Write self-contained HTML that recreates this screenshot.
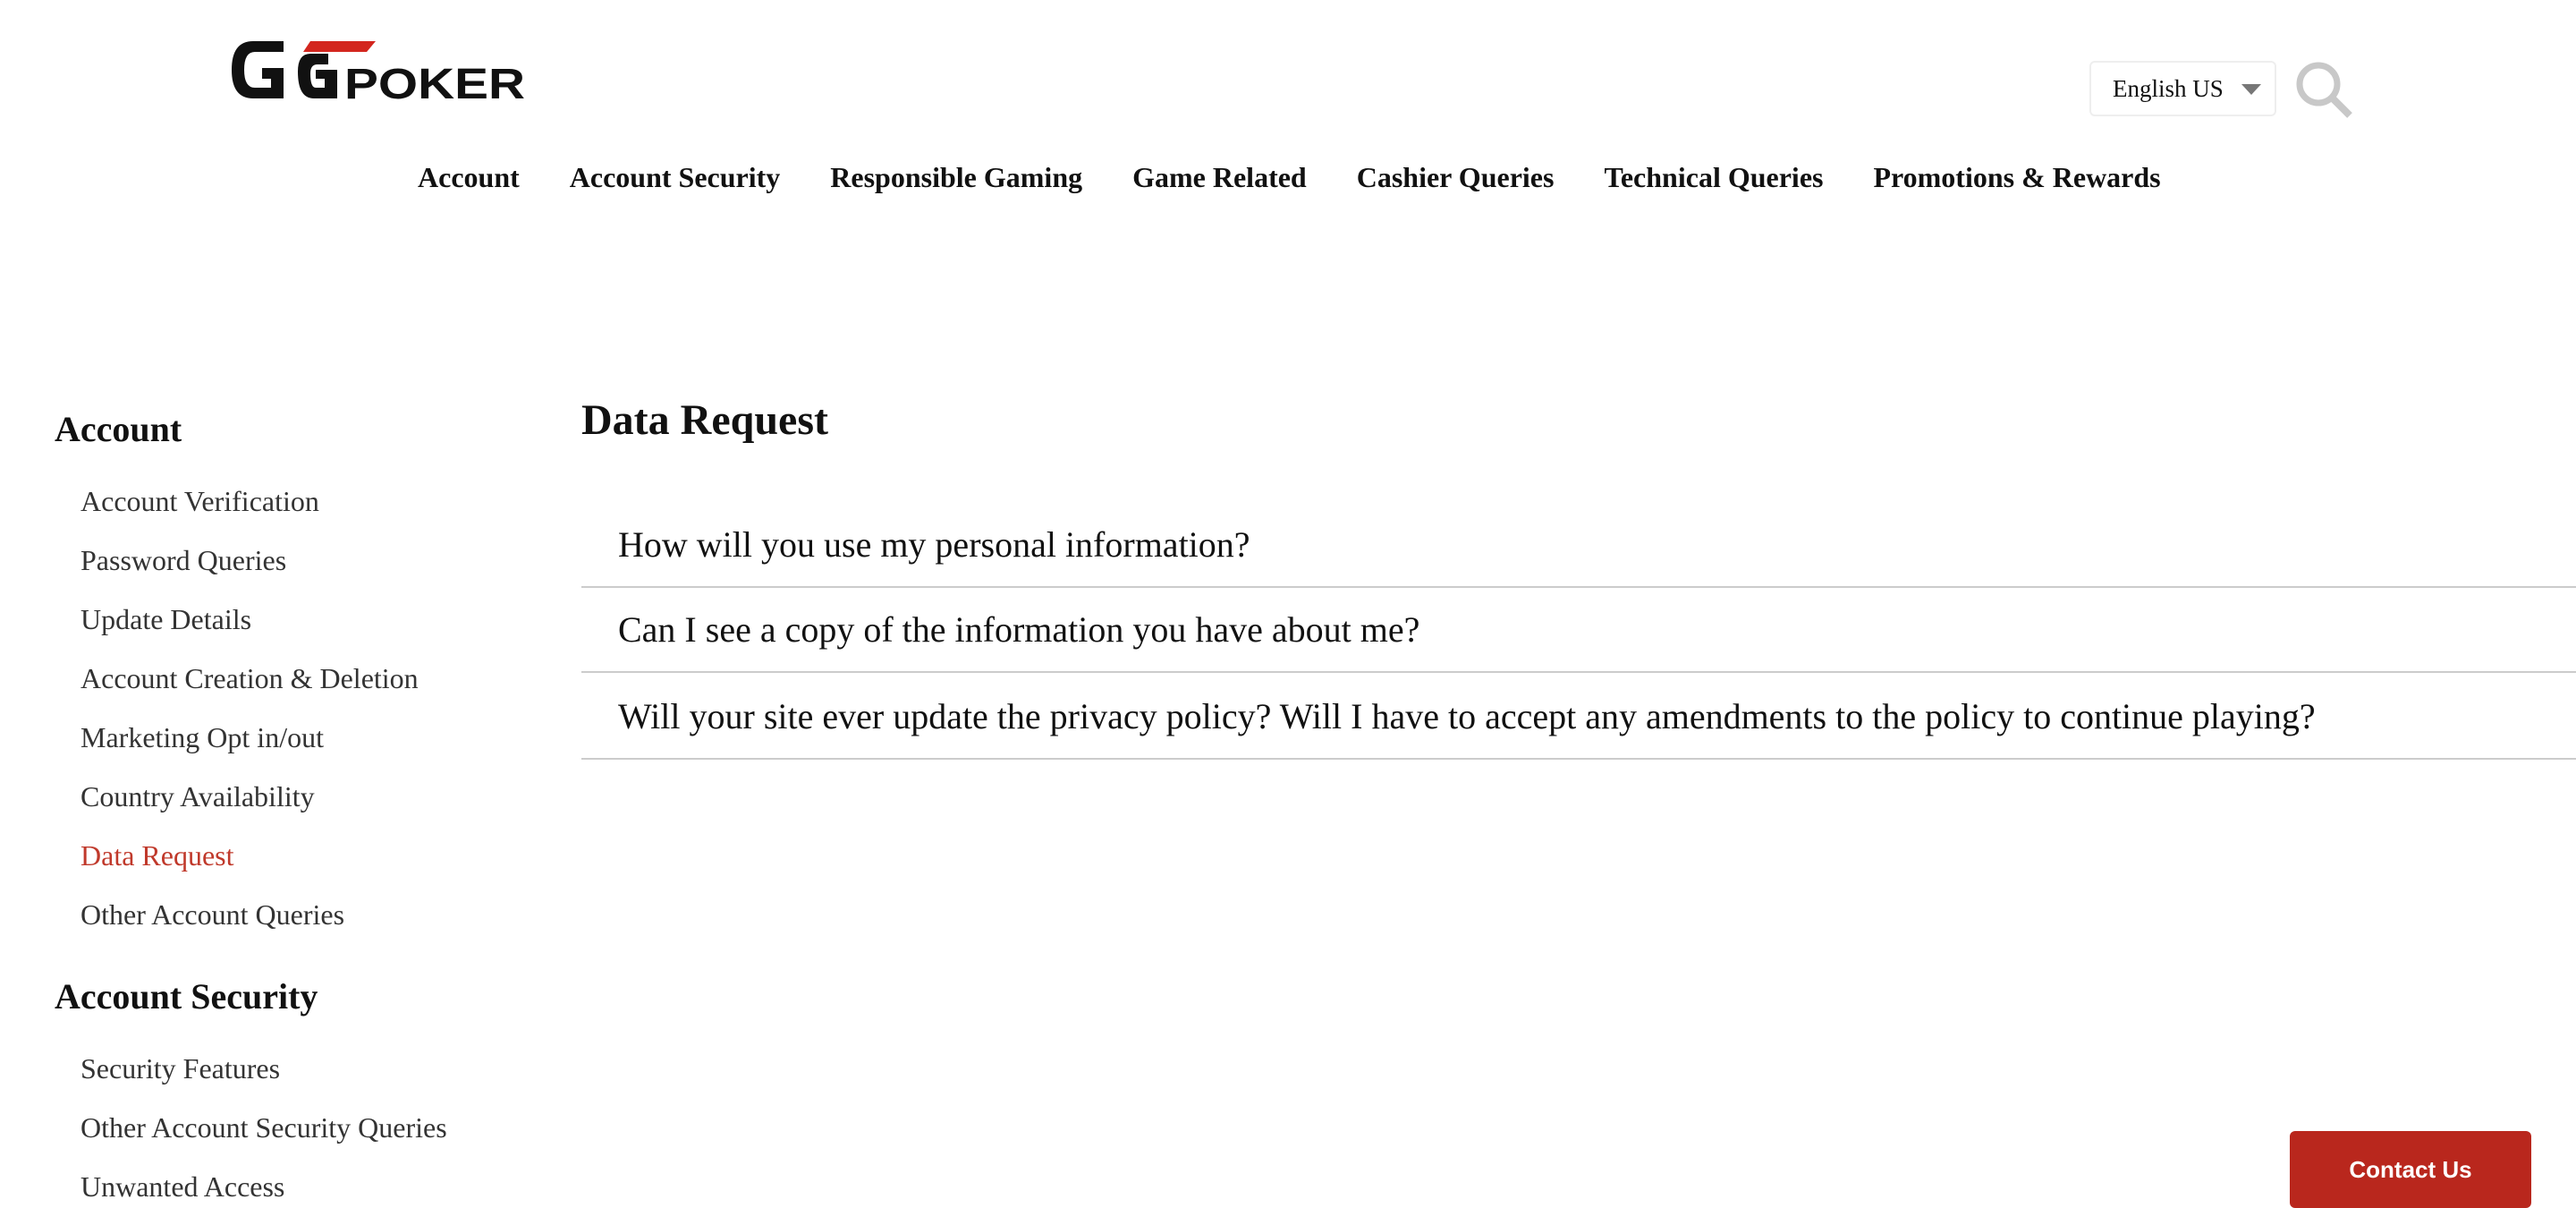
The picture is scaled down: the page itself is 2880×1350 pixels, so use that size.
<!DOCTYPE html>
<html><head><meta charset="utf-8"><style>
*{margin:0;padding:0;box-sizing:border-box}
body{width:2880px;height:1350px;overflow:hidden;background:#fff;font-family:"Liberation Serif",serif;color:#111;position:relative}
.abs{position:absolute;white-space:nowrap}
.nav{position:absolute;top:180px;left:467px;font-weight:bold;font-size:32px;display:flex;gap:0}
.nav span{margin-right:56px}
.side h3{font-size:40px;font-weight:bold;position:absolute;left:61px}
.side a{position:absolute;left:90px;font-size:32px;color:#333;text-decoration:none}
.row{position:absolute;left:650px;width:2230px;height:96px;border-bottom:2px solid #ccc;font-size:40px;padding-left:41px;line-height:96px}
</style></head><body>
<svg class="abs" style="left:255px;top:40px" width="335" height="74" viewBox="0 0 335 74">
<path d="M62 6 H28 Q4 6 4 38 Q4 70 28 70 H62 V36 H38 V48 H48 V58 H30 Q18 58 18 38 Q18 18 30 18 H62Z" fill="#111"/>
<path d="M112 20 H92 Q78 20 78 40 Q78 70 96 70 H122 V38 H98 V48 H108 V58 H98 Q92 58 92 42 Q92 32 100 32 H112Z" fill="#111"/>
<path d="M92 6 H165 L155 18 H84Z" fill="#d3261e"/>
<text x="130" y="70" font-family="Liberation Sans,sans-serif" font-weight="bold" font-size="48" fill="#111" textLength="202" lengthAdjust="spacingAndGlyphs">POKER</text>
</svg>
<div class="abs" style="left:2336px;top:68px;width:209px;height:62px;border:2px solid #eee;border-radius:6px;font-size:27px;line-height:58px;padding-left:24px">English US</div>
<div class="abs" style="left:2506px;top:94px;width:0;height:0;border-left:11px solid transparent;border-right:11px solid transparent;border-top:12px solid #777"></div>
<svg class="abs" style="left:2566px;top:68px" width="66" height="66" viewBox="0 0 66 66"><circle cx="26" cy="26" r="21" fill="none" stroke="#c8c8c8" stroke-width="7"/><line x1="41" y1="41" x2="61" y2="61" stroke="#c8c8c8" stroke-width="8"/></svg>
<div class="nav"><span>Account</span><span>Account Security</span><span>Responsible Gaming</span><span>Game Related</span><span>Cashier Queries</span><span>Technical Queries</span><span>Promotions &amp; Rewards</span></div>
<div class="side">
<h3 style="top:456px">Account</h3>
<a style="top:542px">Account Verification</a>
<a style="top:608px">Password Queries</a>
<a style="top:674px">Update Details</a>
<a style="top:740px">Account Creation &amp; Deletion</a>
<a style="top:806px">Marketing Opt in/out</a>
<a style="top:872px">Country Availability</a>
<a style="top:938px;color:#c0392b">Data Request</a>
<a style="top:1004px">Other Account Queries</a>
<h3 style="top:1090px">Account Security</h3>
<a style="top:1176px">Security Features</a>
<a style="top:1242px">Other Account Security Queries</a>
<a style="top:1308px">Unwanted Access</a>
</div>
<div class="abs" style="left:650px;top:442px;font-size:48px;font-weight:bold">Data Request</div>
<div class="row" style="top:561px">How will you use my personal information?</div>
<div class="row" style="top:656px">Can I see a copy of the information you have about me?</div>
<div class="row" style="top:753px">Will your site ever update the privacy policy? Will I have to accept any amendments to the policy to continue playing?</div>
<div class="abs" style="left:2560px;top:1264px;width:270px;height:86px;background:#b9271d;border-radius:6px;color:#fff;font-family:'Liberation Sans',sans-serif;font-weight:bold;font-size:26px;text-align:center;line-height:86px">Contact Us</div>
</body></html>
